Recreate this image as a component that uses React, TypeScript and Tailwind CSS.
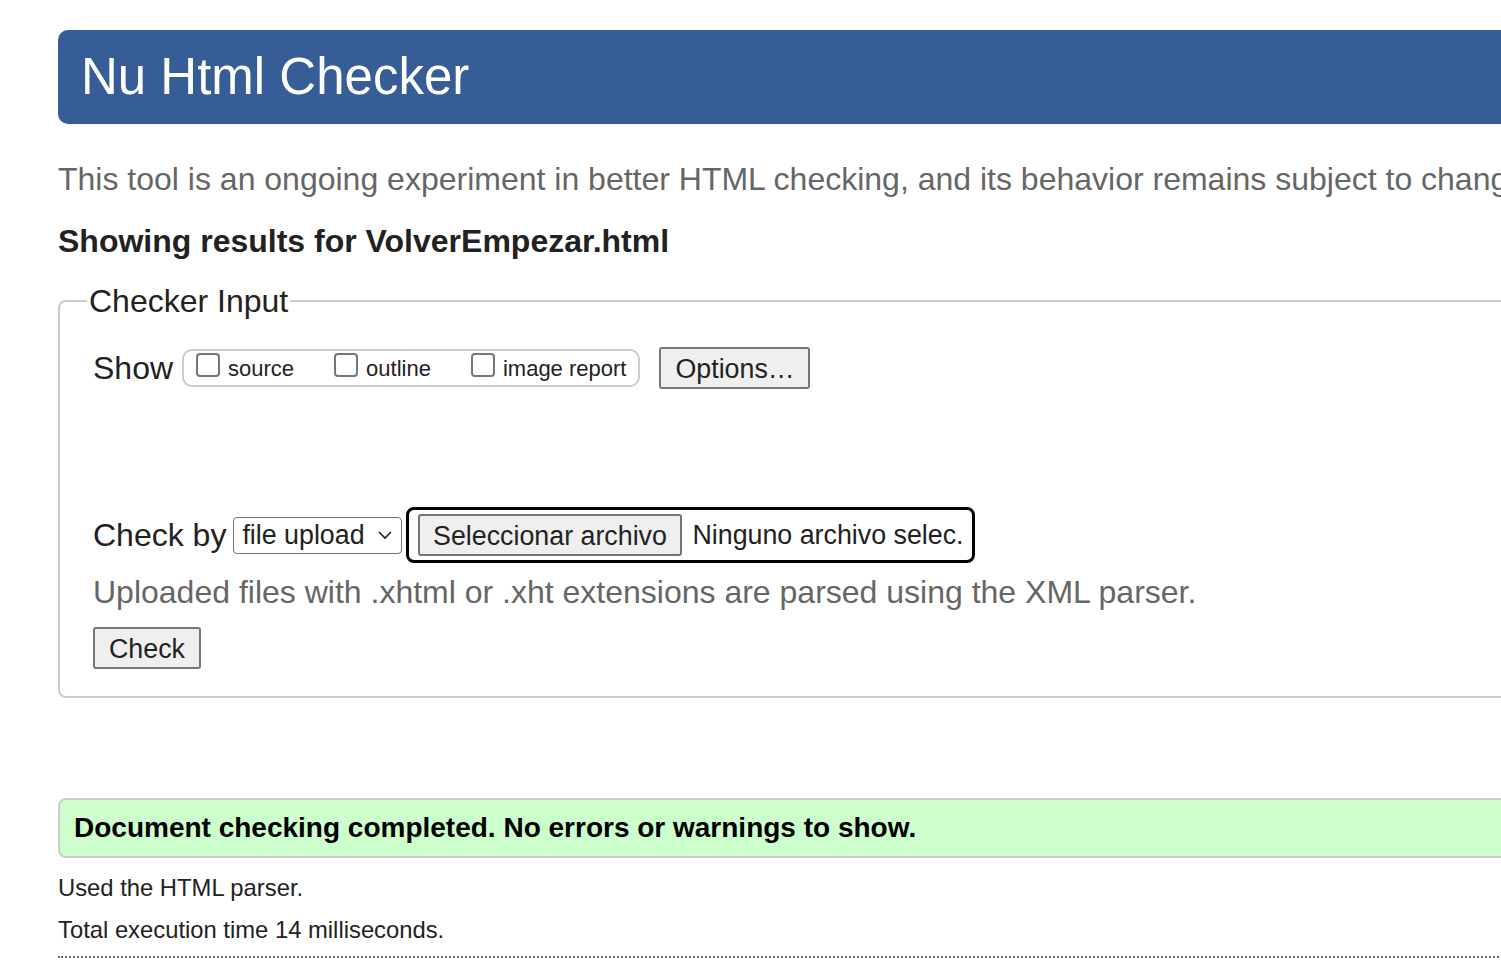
const options = ["source", "outline", "image report"];

function Checkbox() {
  return <span className="mb-[6px] inline-block h-[24px] w-[24px] shrink-0 rounded-[4px] border-2 border-[#767676] bg-white" />;
}

function Chevron() {
  return (
    <svg width="16" height="10" viewBox="0 0 16 10" className="ml-[12px]">
      <path d="M2 2 L8 8 L14 2" fill="none" stroke="#222" strokeWidth="1.6" />
    </svg>
  );
}

export default function App() {
  return (
    <div className="h-[960px] w-full overflow-hidden bg-white pt-[30px] font-['Liberation_Sans',Arial,sans-serif] text-[#222]">
      <div className="ml-[58px] w-[1700px]">
        <h1 className="flex h-[94px] items-center rounded-l-[10px] bg-[#365d95] pl-[23px] text-[51px] font-normal text-white">
          Nu Html Checker
        </h1>

        <p className="mt-[37px] whitespace-nowrap text-[32px] leading-[36px] text-[#666]">
          This tool is an ongoing experiment in better HTML checking, and its behavior remains subject to change.
        </p>

        <h2 className="mt-[26px] text-[32px] font-bold leading-[36px]">Showing results for VolverEmpezar.html</h2>

        <fieldset className="mt-[24px] rounded-[8px] border-2 border-[#ccc] pb-[27px] pl-[27px]">
          <legend className="px-[2px] text-[32px] leading-[36px]">Checker Input</legend>
          <div className="pl-[6px] pt-[28px]">
            <div className="flex items-center">
              <span className="text-[32px] leading-[36px]">Show</span>
              <div className="ml-[9px] flex h-[38px] items-center gap-[40px] rounded-[10px] border-2 border-[#ccc] pl-[12px] pr-[12px]">
                {options.map((o) => (
                  <label key={o} className="flex items-center gap-[8px] text-[22px]">
                    <Checkbox />
                    <span>{o}</span>
                  </label>
                ))}
              </div>
              <button className="ml-[19px] h-[42px] rounded-[3px] border-2 border-[#767676] bg-[#efefef] pl-[14px] pr-[13px] text-[26.8px]">
                Options…
              </button>
            </div>

            <div className="mt-[118px] flex items-center">
              <span className="text-[32px] leading-[36px]">Check by</span>
              <div className="ml-[7px] flex h-[37px] items-center rounded-[4px] border-[1.5px] border-[#767676] pl-[8px] pr-[8px] text-[26.8px]">
                file upload
                <Chevron />
              </div>
              <div className="ml-[4px] flex h-[56px] items-center rounded-[8px] border-[3px] border-black pl-[9px] pr-[8px]">
                <button className="h-[42px] rounded-[3px] border-2 border-[#767676] bg-[#efefef] px-[13.5px] text-[26.8px]">
                  Seleccionar archivo
                </button>
                <span className="ml-[10px] text-[26.8px]">Ninguno archivo selec.</span>
              </div>
            </div>

            <p className="mt-[11px] text-[32px] leading-[36px] text-[#666]">
              Uploaded files with .xhtml or .xht extensions are parsed using the XML parser.
            </p>

            <button className="mt-[17px] h-[42px] rounded-[3px] border-2 border-[#767676] bg-[#efefef] px-[14px] text-[26.8px]">
              Check
            </button>
          </div>
        </fieldset>

        <div className="mt-[100px] flex h-[60px] items-center rounded-l-[8px] border-2 border-[#ccc] bg-[#ccffcc] pl-[14px] text-[28px] font-bold text-black">
          Document checking completed. No errors or warnings to show.
        </div>

        <p className="mt-[16px] text-[23.8px] leading-[27px]">Used the HTML parser.</p>
        <p className="mt-[15px] text-[23.8px] leading-[27px]">Total execution time 14 milliseconds.</p>

        <div className="mt-[13px] border-t-2 border-dotted border-[#666]" />
      </div>
    </div>
  );
}
